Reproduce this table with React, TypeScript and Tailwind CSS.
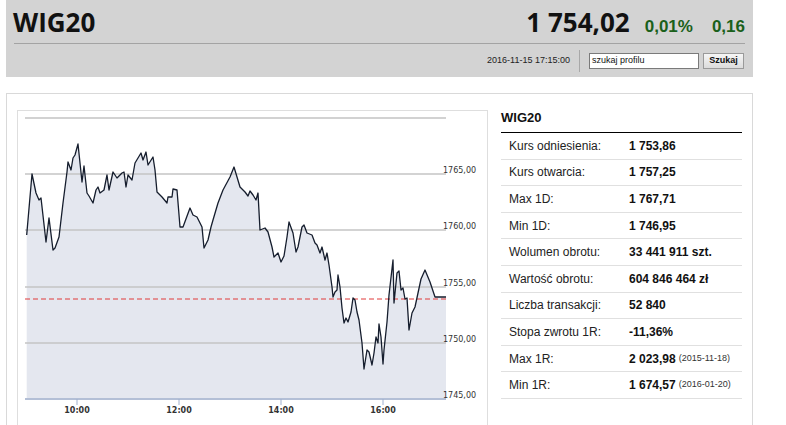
import React from 'react';

interface Row {
    label: string;
    value: string;
    note?: string;
}

const rows: Row[] = [
    { label: 'Kurs odniesienia:', value: '1 753,86' },
    { label: 'Kurs otwarcia:', value: '1 757,25' },
    { label: 'Max 1D:', value: '1 767,71' },
    { label: 'Min 1D:', value: '1 746,95' },
    { label: 'Wolumen obrotu:', value: '33 441 911 szt.' },
    { label: 'Wartość obrotu:', value: '604 846 464 zł' },
    { label: 'Liczba transakcji:', value: '52 840' },
    { label: 'Stopa zwrotu 1R:', value: '-11,36%' },
    { label: 'Max 1R:', value: '2 023,98', note: '(2015-11-18)' },
    { label: 'Min 1R:', value: '1 674,57', note: '(2016-01-20)' },
];

// intraday quotes, already in page pixels (x: time, y: price)
const points: [number, number][] = [
    [26.7, 235], [32, 174], [36, 193], [39, 200], [41, 198], [46, 242], [49, 218], [53, 250],
    [55, 248], [59, 237], [63, 203], [67, 172], [68, 162], [71, 170], [73, 158], [75, 155],
    [78, 144], [82, 182], [84, 166], [87, 193], [89, 196], [93, 203], [96, 190], [98, 187],
    [100, 193], [104, 190], [107, 175], [109, 190], [113, 172], [117, 178], [122, 173], [124, 172],
    [126, 187], [128, 175], [132, 180], [135, 163], [138, 158], [141, 153], [143, 160], [146, 152],
    [148, 165], [153, 157], [155, 170], [157, 192], [162, 197], [167, 203], [168, 197], [172, 197],
    [173, 189], [177, 190], [180, 227], [183, 227], [190, 208], [193, 215], [197, 217], [202, 227],
    [204, 248], [208, 240], [211, 227], [213, 220], [218, 203], [223, 190], [230, 177], [234, 167],
    [240, 187], [245, 192], [248, 196], [250, 191], [253, 195], [256, 200], [258, 193], [260, 230],
    [265, 228], [268, 232], [272, 247], [274, 257], [278, 253], [281, 262], [284, 256], [287, 237],
    [289, 222], [293, 233], [296, 252], [298, 247], [302, 227], [304, 225], [307, 233], [312, 235],
    [315, 243], [317, 245], [320, 253], [322, 247], [325, 260], [327, 253], [329, 265], [332, 287],
    [333, 297], [335, 292], [337, 290], [338, 275], [340, 287], [342, 308], [344, 323], [346, 318],
    [348, 322], [351, 312], [353, 298], [355, 300], [357, 312], [359, 320], [362, 343], [364, 369],
    [367, 350], [369, 352], [372, 365], [374, 353], [376, 337], [378, 343], [379, 324], [381, 337],
    [383, 364], [384, 350], [387, 322], [389, 295], [393, 260], [394, 303], [397, 273], [399, 271],
    [401, 290], [403, 288], [405, 299], [407, 298], [409, 330], [412, 313], [415, 307], [418, 293],
    [421, 279], [425, 270], [430, 282], [435, 297], [446, 297],
];

const grid = [
    { y: 174, label: '1765,00' },
    { y: 230, label: '1760,00' },
    { y: 287, label: '1755,00' },
    { y: 343, label: '1750,00' },
];

const times = [
    { x: 77, label: '10:00' },
    { x: 179, label: '12:00' },
    { x: 281, label: '14:00' },
    { x: 383, label: '16:00' },
];

const Chart: React.FC = () => {
    const line = points.map(([x, y], i) => `${i === 0 ? 'M' : 'L'}${x} ${y}`).join(' ');
    const area = `${line} L446 399 L26.7 399 Z`;

    return (
        <svg width="469" height="320" viewBox="18 111 469 320" className="block">
            <path d={area} fill="#e4e7ef" />
            <line x1="25" y1="118" x2="446" y2="118" stroke="#d2d2d2" strokeWidth="2" />
            {grid.map((g) => (
                <g key={g.label}>
                    <line x1="25" y1={g.y} x2="446" y2={g.y} stroke="#c4c4c4" strokeWidth="1.5" />
                    <text x="443" y={g.y - 1} fontSize="8" fontFamily="'DejaVu Sans', sans-serif" fill="#333">
                        {g.label}
                    </text>
                </g>
            ))}
            <text x="443" y="398" fontSize="8" fontFamily="'DejaVu Sans', sans-serif" fill="#333">
                1745,00
            </text>
            <line x1="25" y1="299" x2="446" y2="299" stroke="#e03a3a" strokeWidth="1" strokeDasharray="5 3" />
            <path d={line} fill="none" stroke="#151d2d" strokeWidth="1.3" strokeLinejoin="round" />
            <line x1="25" y1="399" x2="446" y2="399" stroke="#b3bfd6" strokeWidth="2" />
            {times.map((t) => (
                <g key={t.label}>
                    <line x1={t.x} y1="399" x2={t.x} y2="405" stroke="#9fb0cf" strokeWidth="1" />
                    <text
                        x={t.x}
                        y="413"
                        fontSize="8"
                        textAnchor="middle"
                        fontFamily="'DejaVu Sans', sans-serif"
                        fontWeight="bold"
                        fill="#333"
                    >
                        {t.label}
                    </text>
                </g>
            ))}
        </svg>
    );
};

const App: React.FC = () => {
    return (
        <div className="w-[786px] h-[425px] overflow-hidden bg-white font-['Liberation_Sans',Arial,sans-serif] text-[#222]">
            <div className="ml-[6px] w-[747px] h-[77px] bg-[#d3d3d3]">
                <div className="mx-[8px] h-[44px] flex items-center justify-between border-b border-[#a3a3a3]">
                    <h1 className="-ml-[1px] text-[26px] font-bold text-[#111] font-['Open_Sans',sans-serif] leading-none">
                        WIG20
                    </h1>
                    <div className="flex items-baseline leading-none">
                        <span className="text-[26px] font-bold text-[#111] font-['Open_Sans',sans-serif]">1 754,02</span>
                        <span className="ml-[15px] text-[17px] font-bold text-[#1a601a]">0,01%</span>
                        <span className="ml-[19px] text-[17px] font-bold text-[#1a601a]">0,16</span>
                    </div>
                </div>
                <div className="h-[33px] flex items-center justify-end pr-[9px]">
                    <span className="text-[9px] text-[#222]">2016-11-15 17:15:00</span>
                    <div className="mx-[9px] w-px h-[22px] bg-[#a8a8a8]" />
                    <div className="w-[110px] h-[16px] bg-white border border-[#7a7a7a] flex items-center pl-[2px] text-[9px] text-[#111]">
                        szukaj profilu
                    </div>
                    <button className="ml-[4px] w-[41px] h-[16px] border border-[#9a9a9a] bg-gradient-to-b from-[#f6f6f6] to-[#dcdcdc] text-[9px] font-bold text-[#111] flex items-center justify-center">
                        Szukaj
                    </button>
                </div>
            </div>

            <div className="mt-[16px] ml-[6px] w-[747px] h-[360px] border border-[#d9d9d9] flex pl-[10px] pt-[16px]">
                <div className="w-[471px] h-[330px] border border-[#dedede]">
                    <Chart />
                </div>

                <div className="ml-[13px] w-[241px]">
                    <div className="text-[13px] font-bold leading-[15px] pb-[7px] border-b border-black text-[#111]">WIG20</div>
                    {rows.map((row) => (
                        <div key={row.label} className="h-[26.6px] flex items-center border-b border-[#e0e0e0] text-[12px]">
                            <span className="w-[128px] pl-[8px] text-[#222]">{row.label}</span>
                            <span className="font-bold text-[#111]">{row.value}</span>
                            {row.note && <span className="ml-[3px] text-[9px] text-[#333]">{row.note}</span>}
                        </div>
                    ))}
                </div>
            </div>
        </div>
    );
};

export default App;
